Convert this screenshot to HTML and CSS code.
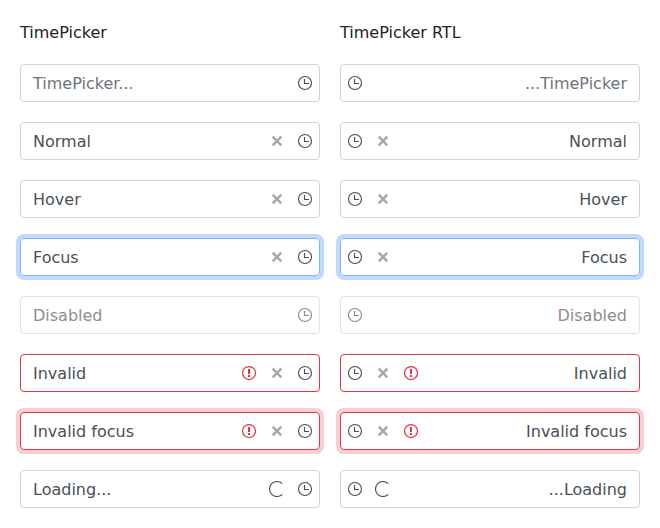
FILE: index.html
```html
<!DOCTYPE html>
<html lang="en">
<head>
<meta charset="utf-8">
<title>TimePicker</title>
<link rel="stylesheet" href="styles.css">
</head>
<body>
<svg class="defs" aria-hidden="true">
<symbol id="clock" viewBox="0 0 16 16"><circle cx="8" cy="8" r="6.5"/><path d="M7.5 4v4.5H12"/></symbol>
<symbol id="clear" viewBox="0 0 16 16"><path d="M3.7 3.7l8.6 8.6M12.3 3.7l-8.6 8.6"/></symbol>
<symbol id="warning" viewBox="0 0 16 16"><circle cx="8" cy="8" r="6.5"/><path class="mark" d="M8 4v5M8 10v2"/></symbol>
<symbol id="loading" viewBox="0 0 16 16"><path d="M13.3 2.7A7.5 7.5 0 1 0 13.3 13.3"/></symbol>
</svg>
<main class="examples" id="examples"></main>
<script src="script.js"></script>
</body>
</html>
```
FILE: styles.css
```css
* { box-sizing: border-box; }
body { margin: 0; background: #fff; color: #212529; font: 16px/24px "DejaVu Sans", sans-serif; }
.defs { display: none; }
.examples { display: grid; grid-template-columns: 300px 300px; gap: 20px; padding: 20px; }
.column { display: flex; flex-direction: column; gap: 20px; }
.title { margin: 0; height: 24px; padding-top: 1px; font: inherit; }
.picker { display: flex; align-items: center; height: 38px; border: 1px solid #ced4da; border-radius: 4px; color: #495057; }
.value { flex: 1; padding: 2px 12px 0; }
.icon { width: 28px; height: 16px; fill: none; stroke: #495057; stroke-width: 1.15; }
.icon-clear { stroke: #a4a7ab; stroke-width: 2.4; }
.icon-warning { stroke: #dc3545; stroke-width: 1.25; }
.mark { stroke-width: 2; }
.placeholder { color: #6c757d; }
.focus { border-color: #80b4ff; box-shadow: 0 0 0 4px #bfd9ff; }
.disabled { opacity: .65; color: #4f4f54; }
.invalid { border-color: #dc3545; }
.invalid-focus { border-color: #dc3545; box-shadow: 0 0 0 4px #f6cdd1; }
```
FILE: script.js
```js
const rows = [
  ["TimePicker...", "placeholder", []],
  ["Normal", "", ["clear"]],
  ["Hover", "", ["clear"]],
  ["Focus", "focus", ["clear"]],
  ["Disabled", "disabled", []],
  ["Invalid", "invalid", ["warning", "clear"]],
  ["Invalid focus", "invalid-focus", ["warning", "clear"]],
  ["Loading...", "", ["loading"]]
];
const icon = name => `<svg class="icon icon-${name}"><use href="#${name}"/></svg>`;
const column = (title, dir) => `<section class="column"><h2 class="title">${title}</h2>${rows.map(([text, state, icons]) =>
  `<div class="picker ${state}" dir="${dir}"><span class="value">${text}</span>${[...icons, "clock"].map(icon).join("")}</div>`).join("")}</section>`;
document.getElementById("examples").innerHTML = column("TimePicker", "ltr") + column("TimePicker RTL", "rtl");
```
